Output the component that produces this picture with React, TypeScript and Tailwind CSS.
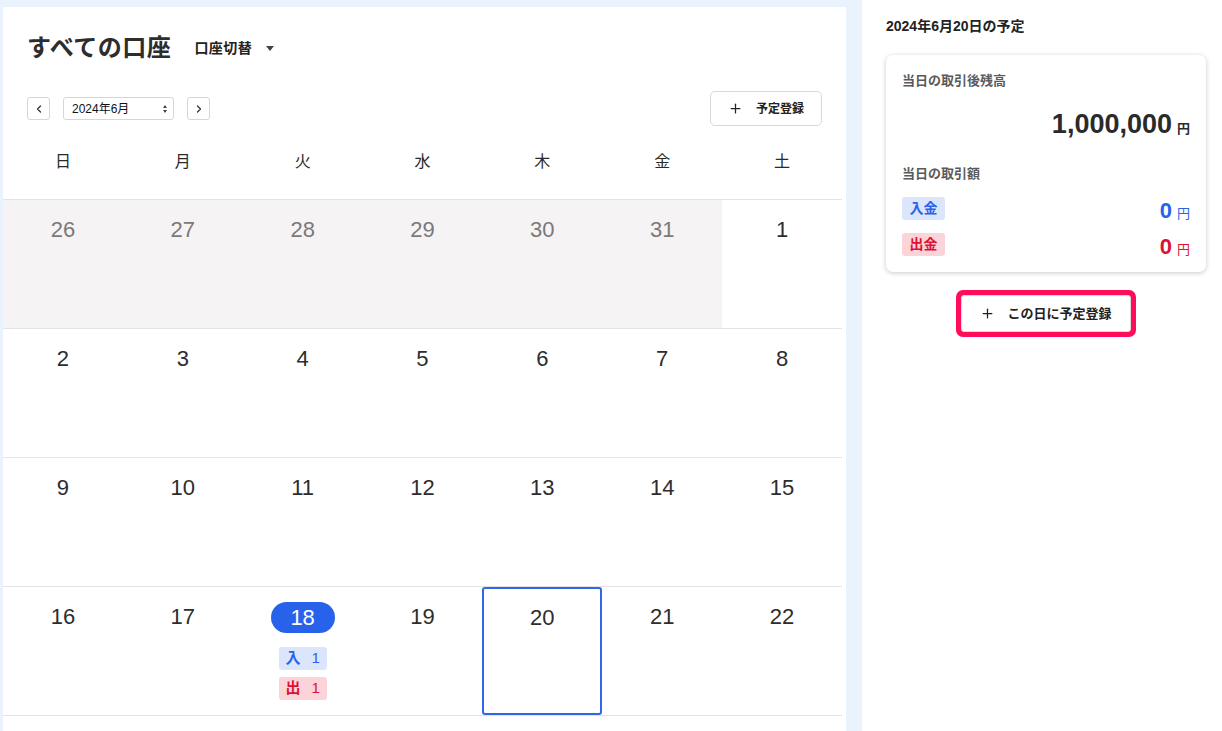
import { Plus, ChevronLeft, ChevronRight } from "lucide-react";

const WEEK = ["日", "月", "火", "水", "木", "金", "土"];

type Cell = { day: number; muted?: boolean };

const rows: Cell[][] = [
  [26, 27, 28, 29, 30, 31].map((d) => ({ day: d, muted: true })).concat([{ day: 1 }]),
  [2, 3, 4, 5, 6, 7, 8].map((d) => ({ day: d })),
  [9, 10, 11, 12, 13, 14, 15].map((d) => ({ day: d })),
  [16, 17, 18, 19, 20, 21, 22].map((d) => ({ day: d })),
];

const font = "font-['Liberation_Sans','Noto_Sans_CJK_JP',sans-serif]";

const DayCell = ({ cell }: { cell: Cell }) => {
  const today = cell.day === 18 && !cell.muted;
  const selected = cell.day === 20 && !cell.muted;
  return (
    <div
      className={`flex h-[128px] flex-col items-center ${
        cell.muted ? "bg-[#f5f3f3]" : "bg-white"
      } ${selected ? "rounded-[3px] border-2 border-[#2f66ea] pt-[15px]" : "pt-[16px]"}`}
    >
      {today ? (
        <div className="-mt-[1px] flex h-[31px] w-[64px] items-center justify-center rounded-full bg-[#2962ea] text-[22px] text-white">
          18
        </div>
      ) : (
        <div
          className={`h-[28px] text-[22px] leading-[28px] ${
            cell.muted ? "text-[#7b7979]" : "text-[#2d2d2d]"
          }`}
        >
          {cell.day}
        </div>
      )}
      {today && (
        <div className="mt-[14px] flex flex-col gap-[7px]">
          <span className="flex h-[23px] w-[48px] items-center justify-center gap-[11px] rounded-[3px] bg-[#dbe6fd] text-[15px] font-bold text-[#2962ea]">
            <span>入</span>
            <span className="font-normal">1</span>
          </span>
          <span className="flex h-[23px] w-[48px] items-center justify-center gap-[11px] rounded-[3px] bg-[#fbd4da] text-[15px] font-bold text-[#dc1234]">
            <span>出</span>
            <span className="font-normal">1</span>
          </span>
        </div>
      )}
    </div>
  );
};

export default function App() {
  return (
    <div className={`flex h-[731px] w-[1222px] overflow-hidden bg-[#eaf2fd] ${font}`}>
      {/* calendar panel */}
      <div className="ml-[3px] mt-[7px] w-[843px] bg-white">
        <div className="flex items-center pl-[24px] pt-[26px]">
          <h1 className="text-[24px] font-bold leading-[30px] tracking-[0.5px] text-[#2d2d2d]">すべての口座</h1>
          <button className="ml-[23px] flex items-center text-[14px] font-bold tracking-[0.5px] text-[#222]">
            口座切替
            <span className="ml-[14px] h-0 w-0 border-x-[4px] border-t-[5px] border-x-transparent border-t-[#444]" />
          </button>
        </div>

        <div className="mt-[28px] flex items-center pl-[24px] pr-[24px]">
          <button className="flex h-[23px] w-[23px] items-center justify-center rounded-[3px] border border-[#d6d6d6] text-[#333]">
            <ChevronLeft size={12} strokeWidth={2.5} />
          </button>
          <div className="ml-[13px] flex h-[23px] w-[111px] items-center justify-between rounded-[3px] border border-[#d6d6d6] pl-[8px] pr-[6px] text-[12px] text-[#111]">
            <span>2024年6月</span>
            <span className="flex flex-col items-center gap-[2px]">
              <span className="h-0 w-0 border-x-[2.5px] border-b-[3px] border-x-transparent border-b-[#444]" />
              <span className="h-0 w-0 border-x-[2.5px] border-t-[3px] border-x-transparent border-t-[#444]" />
            </span>
          </div>
          <button className="ml-[13px] flex h-[23px] w-[23px] items-center justify-center rounded-[3px] border border-[#d6d6d6] text-[#333]">
            <ChevronRight size={12} strokeWidth={2.5} />
          </button>
          <button className="ml-auto flex h-[35px] w-[112px] items-center justify-center gap-[13px] rounded-[5px] border border-[#d9d9d9] text-[12px] font-bold text-[#222]">
            <Plus size={15} strokeWidth={2} />
            予定登録
          </button>
        </div>

        <div className="mt-[14px] w-[839px]">
          <div className="grid h-[60px] grid-cols-7 border-b border-[#e3e3e3]">
            {WEEK.map((w) => (
              <div key={w} className="pt-[12px] text-center text-[16px] leading-[20px] text-[#2a2a2a]">
                {w}
              </div>
            ))}
          </div>
          {rows.map((r, i) => (
            <div key={i} className="grid grid-cols-7 border-b border-[#e3e3e3]">
              {r.map((c) => (
                <DayCell key={`${i}-${c.day}`} cell={c} />
              ))}
            </div>
          ))}
        </div>
      </div>

      {/* day detail panel */}
      <div className="ml-[16px] w-[360px] bg-white pl-[24px] pt-[16px]">
        <h2 className="text-[14px] font-bold leading-[20px] text-[#222]">2024年6月20日の予定</h2>
        <div className="mt-[19px] w-[320px] rounded-[7px] bg-white px-[16px] pb-[16px] pt-[17px] shadow-[0_1px_5px_rgba(0,0,0,0.22)]">
          <div className="text-[13px] font-bold leading-[18px] text-[#5a5a5a]">当日の取引後残高</div>
          <div className="mt-[17px] flex items-baseline justify-end gap-[5px] text-[#2a2a2a]">
            <span className="text-[27px] font-bold leading-[34px]">1,000,000</span>
            <span className="text-[13px] font-bold">円</span>
          </div>
          <div className="mt-[24px] text-[13px] font-bold leading-[18px] text-[#5a5a5a]">当日の取引額</div>
          <div className="mt-[14px] flex h-[23px] items-center justify-between">
            <span className="flex h-[23px] w-[43px] items-center justify-center rounded-[3px] bg-[#dbe6fd] text-[14px] font-bold text-[#2962ea]">
              入金
            </span>
            <span className="flex items-baseline gap-[5px] pt-[4px] text-[#2962ea]">
              <span className="text-[22px] font-bold leading-[26px]">0</span>
              <span className="text-[13px]">円</span>
            </span>
          </div>
          <div className="mt-[13px] flex h-[23px] items-center justify-between">
            <span className="flex h-[23px] w-[43px] items-center justify-center rounded-[3px] bg-[#fbd4da] text-[14px] font-bold text-[#dc1234]">
              出金
            </span>
            <span className="flex items-baseline gap-[5px] pt-[4px] text-[#dc1234]">
              <span className="text-[22px] font-bold leading-[26px]">0</span>
              <span className="text-[13px]">円</span>
            </span>
          </div>
        </div>
        <div className="mt-[18px] flex w-[320px] justify-center">
          <div className="rounded-[7px] bg-[#ff0d5a] p-[5px]">
            <button className="flex h-[37px] w-[170px] items-center justify-center gap-[12px] rounded-[3px] border border-[#dcdcdc] bg-white text-[13px] font-bold text-[#222]">
              <Plus size={15} strokeWidth={2} />
              この日に予定登録
            </button>
          </div>
        </div>
      </div>
    </div>
  );
}
